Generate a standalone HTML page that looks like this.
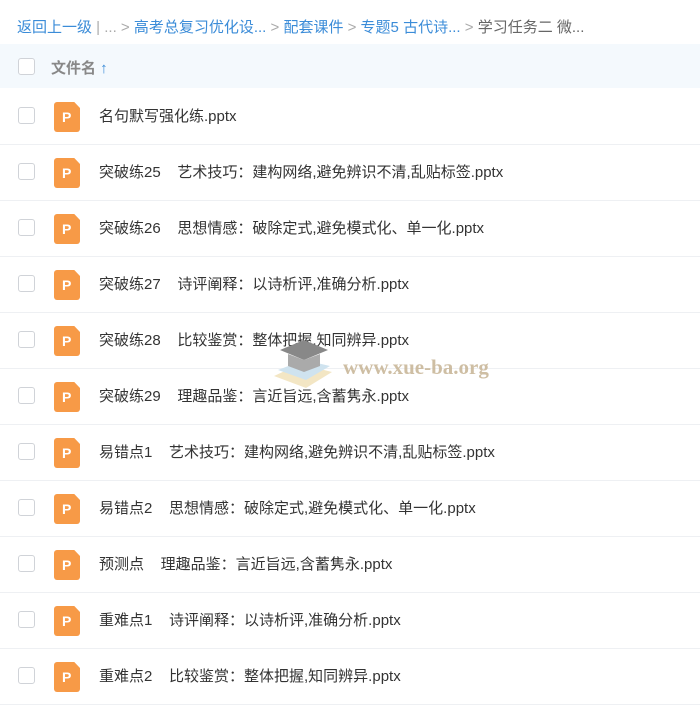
<!DOCTYPE html><html><head><meta charset="utf-8"><style>
body{margin:0;width:700px;height:692px;overflow:hidden;background:#fff;font-family:"Liberation Sans","Noto Sans CJK SC",sans-serif;}
.bc{position:absolute;top:16px;left:17px;font-size:15px;color:#3b8cd8;white-space:nowrap}
.bc .g{color:#aaa}.bc .d{color:#666}
.hd{position:absolute;top:44px;left:0;width:700px;height:44px;background:#f4f9fd}
.cb{position:absolute;left:18px;width:15px;height:15px;border:1px solid #d0d3d8;border-radius:3px;background:#fff}
.hd .t{position:absolute;left:51px;top:13px;font-size:15px;color:#888;font-weight:bold}
.hd .t span{color:#3b8cd8}
.row{position:absolute;left:0;width:700px;height:56px;border-bottom:1px solid #eef0f3}
.row .cb{top:19px}
.ic{position:absolute;left:54px;top:14px;width:26px;height:30px;background:#f79a47;border-radius:3px;clip-path:polygon(0 0,78% 0,100% 20%,100% 100%,0 100%)}
.ic:after{content:"P";position:absolute;left:8px;top:7px;color:#fff;font-size:14px;font-weight:bold}
.row .n{position:absolute;left:99px;top:17px;font-size:15px;color:#333;white-space:pre}
.wm{position:absolute;left:343px;top:355px;font-family:"Liberation Serif",serif;font-weight:bold;font-size:21px;color:#c9b79a;opacity:.9}
</style></head><body>
<div class="bc">返回上一级 <span class="g">| ... &gt;</span> 高考总复习优化设... <span class="g">&gt;</span> 配套课件 <span class="g">&gt;</span> 专题5 古代诗... <span class="g">&gt;</span> <span class="d">学习任务二 微...</span></div>
<div class="hd"><div class="cb" style="top:14px"></div><div class="t">文件名 <span>↑</span></div></div>
<div class="row" style="top:88px"><div class="cb"></div><div class="ic"></div><div class="n">名句默写强化练.pptx</div></div>
<div class="row" style="top:144px"><div class="cb"></div><div class="ic"></div><div class="n">突破练25    艺术技巧：建构网络,避免辨识不清,乱贴标签.pptx</div></div>
<div class="row" style="top:200px"><div class="cb"></div><div class="ic"></div><div class="n">突破练26    思想情感：破除定式,避免模式化、单一化.pptx</div></div>
<div class="row" style="top:256px"><div class="cb"></div><div class="ic"></div><div class="n">突破练27    诗评阐释：以诗析评,准确分析.pptx</div></div>
<div class="row" style="top:312px"><div class="cb"></div><div class="ic"></div><div class="n">突破练28    比较鉴赏：整体把握,知同辨异.pptx</div></div>
<div class="row" style="top:368px"><div class="cb"></div><div class="ic"></div><div class="n">突破练29    理趣品鉴：言近旨远,含蓄隽永.pptx</div></div>
<div class="row" style="top:424px"><div class="cb"></div><div class="ic"></div><div class="n">易错点1    艺术技巧：建构网络,避免辨识不清,乱贴标签.pptx</div></div>
<div class="row" style="top:480px"><div class="cb"></div><div class="ic"></div><div class="n">易错点2    思想情感：破除定式,避免模式化、单一化.pptx</div></div>
<div class="row" style="top:536px"><div class="cb"></div><div class="ic"></div><div class="n">预测点    理趣品鉴：言近旨远,含蓄隽永.pptx</div></div>
<div class="row" style="top:592px"><div class="cb"></div><div class="ic"></div><div class="n">重难点1    诗评阐释：以诗析评,准确分析.pptx</div></div>
<div class="row" style="top:648px"><div class="cb"></div><div class="ic"></div><div class="n">重难点2    比较鉴赏：整体把握,知同辨异.pptx</div></div>
<svg style="position:absolute;left:270px;top:336px" width="66" height="56"><path d="M4 40 L30 28 L62 36 L36 52 Z" fill="#f3e6c4"/><path d="M8 34 L34 24 L60 30 L36 44 Z" fill="#cfe3ef"/><path d="M10 14 L34 4 L58 14 L34 24 Z" fill="#888"/><path d="M18 18 L18 30 L34 36 L50 30 L50 18 L34 24 Z" fill="#aaa"/></svg>
<div class="wm">www.xue-ba.org</div>
</body></html>
